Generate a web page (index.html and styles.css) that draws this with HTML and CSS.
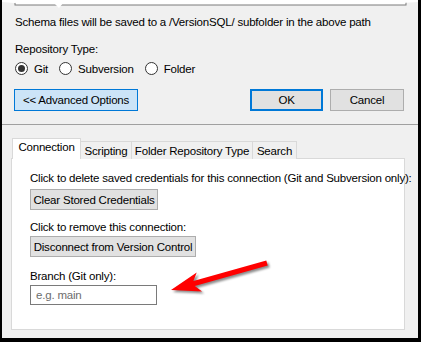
FILE: index.html
```html
<!DOCTYPE html>
<html lang="en">
<head>
    <meta charset="UTF-8">
    <meta name="viewport" content="width=device-width, initial-scale=1.0">
    <title>VersionSQL Options</title>
    <link rel="stylesheet" href="styles.css">
</head>
<body>
    <div class="window">
        <!-- torn top edge of the screenshot, bottom of the path textbox -->
        <svg class="torn" width="416" height="10" viewBox="0 0 416 10">
            <rect x="13" y="-2" width="391" height="7" fill="#fff" stroke="#7a7a7a" stroke-width="1"/>
            <path d="M0 0 H416 V2 L400 3 L380 1.5 L352 3 L330 2 L300 3.5 L270 2 L240 3 L200 1.5 L160 3 L120 2 L90 3 L62 2 L57 8 L52 3 L30 2 L12 3 L0 2 Z" fill="#fff"/>
        </svg>
        <div class="options">
            <p class="note">Schema files will be saved to a /VersionSQL/ subfolder in the above path</p>
            <p class="repo-label">Repository Type:</p>
            <div class="radios">
                <label class="radio"><span class="circle checked"></span>Git</label>
                <label class="radio"><span class="circle"></span>Subversion</label>
                <label class="radio"><span class="circle"></span>Folder</label>
            </div>
            <div class="actions">
                <button class="btn advanced">&lt;&lt; Advanced Options</button>
                <div class="dialog-buttons">
                    <button class="btn ok">OK</button>
                    <button class="btn cancel">Cancel</button>
                </div>
            </div>
        </div>
        <div class="separator"></div>
        <div class="tabs">
            <div class="tab-strip">
                <div class="tab active">Connection</div>
                <div class="tab tab-scripting">Scripting</div>
                <div class="tab tab-folder">Folder Repository Type</div>
                <div class="tab tab-search">Search</div>
            </div>
            <div class="tab-panel">
                <p class="panel-text">Click to delete saved credentials for this connection (Git and Subversion only):</p>
                <button class="btn clear-btn">Clear Stored Credentials</button>
                <p class="panel-text remove-text">Click to remove this connection:</p>
                <button class="btn disconnect-btn">Disconnect from Version Control</button>
                <p class="panel-text branch-text">Branch (Git only):</p>
                <input class="branch-input" type="text" placeholder="e.g. main">
            </div>
        </div>
        <!-- red callout arrow drawn over the dialog -->
        <svg class="arrow" width="115" height="50" viewBox="0 0 115 50">
            <polygon points="11,35 36.7,17.4 33.4,26.1 106.3,5.6 107.7,10.4 34.8,30.9 42.1,36.6" fill="#ff0000"/>
        </svg>
    </div>
</body>
</html>
```

FILE: styles.css
```css
body {
    margin: 0;
    padding: 0;
    background-color: #fff;
    font-family: "Liberation Sans", Arial, sans-serif;
    font-size: 11.5px;
    letter-spacing: -0.2px;
    color: #000;
}
p {
    margin: 0;
    line-height: 15px;
    white-space: nowrap;
}
.window {
    position: relative;
    width: 421px;
    height: 342px;
    box-sizing: border-box;
    background-color: #f0f0f0;
    border-left: 2px solid #000;
    border-right: 3px solid #000;
    border-bottom: 4px solid #000;
    overflow: hidden;
}
.torn {
    display: block;
}
.options {
    padding: 5px 14px 0 13px;
}
.repo-label {
    margin-top: 12px;
}
.radios {
    display: flex;
    margin-top: 4px;
    height: 15px;
    align-items: center;
}
.radio {
    display: flex;
    align-items: center;
    gap: 6px;
    margin-right: 11px;
}
.circle {
    width: 11px;
    height: 11px;
    border: 1px solid #333;
    border-radius: 50%;
    background-color: #fff;
    box-sizing: content-box;
    display: flex;
    align-items: center;
    justify-content: center;
}
.circle.checked::after {
    content: "";
    width: 7px;
    height: 7px;
    border-radius: 50%;
    background-color: #333;
}
.actions {
    display: flex;
    justify-content: space-between;
    margin-top: 13px;
}
.dialog-buttons {
    display: flex;
    gap: 7px;
}
.btn {
    font-family: "Liberation Sans", Arial, sans-serif;
    font-size: 11.5px;
    letter-spacing: -0.2px;
    white-space: nowrap;
    color: #000;
    background-color: #e1e1e1;
    border: 1px solid #adadad;
    padding: 0;
    height: 22px;
    box-sizing: border-box;
}
.advanced {
    margin-left: -1px;
    width: 124px;
    background-color: #cce4f7;
    border-color: #0078d7;
}
.ok {
    width: 73px;
    border: 2px solid #0078d7;
}
.cancel {
    width: 74px;
}
.separator {
    height: 1px;
    background-color: #a0a0a0;
    margin-top: 13px;
}
.tabs {
    margin: 13px 0 0 9px;
    width: 394px;
}
.tab-strip {
    display: flex;
    align-items: flex-end;
    height: 21px;
    margin-bottom: -1px;
    position: relative;
    z-index: 1;
}
.tab {
    height: 18px;
    line-height: 18px;
    box-sizing: border-box;
    border: 1px solid #d9d9d9;
    border-bottom: none;
    background-color: #f0f0f0;
    text-align: center;
    white-space: nowrap;
    margin-left: -1px;
}
.tab.active {
    height: 21px;
    line-height: 17px;
    width: 69px;
    margin-left: 1px;
    background-color: #fff;
    position: relative;
    z-index: 2;
}
.tab-scripting {
    width: 52px;
}
.tab-folder {
    width: 122px;
}
.tab-search {
    width: 45px;
}
.tab-panel {
    height: 172px;
    box-sizing: border-box;
    background-color: #fff;
    border: 1px solid #d9d9d9;
    padding: 12px 0 0 18px;
}
.clear-btn {
    display: block;
    margin-top: 3px;
    width: 128px;
    height: 21px;
}
.remove-text {
    margin-top: 10px;
}
.disconnect-btn {
    display: block;
    margin-top: 1px;
    width: 166px;
    height: 21px;
}
.branch-text {
    margin-top: 12px;
}
.branch-input {
    display: block;
    margin-top: 1px;
    width: 127px;
    height: 20px;
    box-sizing: border-box;
    border: 1px solid #7a7a7a;
    padding: 0 0 0 5px;
    font-family: "Liberation Sans", Arial, sans-serif;
    font-size: 11.5px;
    letter-spacing: -0.2px;
}
.branch-input::placeholder {
    color: #6d6d6d;
}
.arrow {
    position: absolute;
    left: 158px;
    top: 255px;
    filter: drop-shadow(2px 2px 1px rgba(0, 0, 0, 0.45));
}
```
